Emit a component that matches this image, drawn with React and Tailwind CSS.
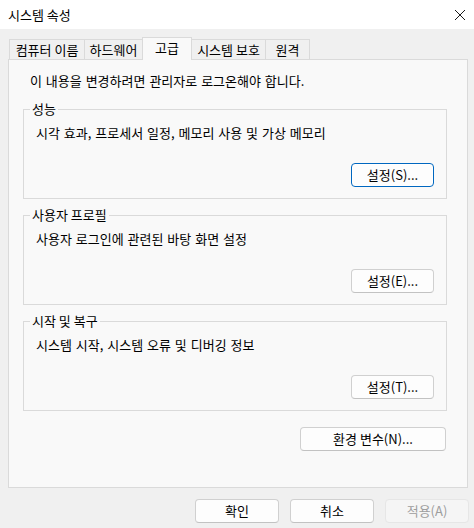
import React from "react";

const font = { fontFamily: '"Noto Sans CJK KR", "Noto Sans", sans-serif' };

function Btn({ children, className = "", primary = false, disabled = false }) {
  return (
    <div
      className={
        "flex items-center justify-center rounded-[4px] border text-[13px] leading-[16px] " +
        (primary
          ? "border-[#0067c0] bg-[#fdfdfd] text-black shadow-[inset_0_0_0_1px_#ffffff] "
          : disabled
          ? "border-[#e6e6e6] bg-[#f5f5f5] text-[#9d9d9d] "
          : "border-[#d0d0d0] border-b-[#c2c2c2] bg-[#fdfdfd] text-black ") +
        className
      }
    >
      {children}
    </div>
  );
}

function Group({ title, desc, btn, primary }) {
  return (
    <fieldset className="ml-[14px] w-[424px] border border-[#dadada] pb-[11px]">
      <legend className="ml-[6px] px-[2px] text-[13px] leading-[16px] text-black">{title}</legend>
      <div className="mt-[8px] pl-[12px] text-[13px] leading-[16px] text-black [word-spacing:1px]">{desc}</div>
      <div className="mt-[22px] flex justify-end pr-[12px]">
        <Btn primary={primary} className="h-[24px] w-[83px]">{btn}</Btn>
      </div>
    </fieldset>
  );
}

const tabs = [
  { label: "컴퓨터 이름", w: "w-[76px]" },
  { label: "하드웨어", w: "w-[59px]" },
  { label: "고급", w: "w-[50px]", active: true },
  { label: "시스템 보호", w: "w-[75px]" },
  { label: "원격", w: "w-[45px]" },
];

export default function App() {
  return (
    <div className="flex h-[528px] w-[474px] flex-col bg-[#f0f0f0] text-black" style={font}>
      <div className="flex h-[29px] items-center justify-between bg-white pl-[8px] pr-[7px]">
        <span className="text-[13px] leading-[16px]">시스템 속성</span>
        <svg width="12" height="12" viewBox="0 0 12 12" className="mr-[1px]">
          <path d="M1 1 L11 11 M11 1 L1 11" stroke="#1a1a1a" strokeWidth="1" fill="none" />
        </svg>
      </div>

      <div className="relative z-10 flex items-end pl-[9px] pt-[8px]">
        {tabs.map((t) =>
          t.active ? (
            <div
              key={t.label}
              className={
                t.w +
                " -ml-px flex h-[23px] items-start justify-center border border-b-0 border-[#dadada] bg-[#f9f9f9] pt-[2px] text-[13px] leading-[16px]"
              }
            >
              {t.label}
            </div>
          ) : (
            <div
              key={t.label}
              className={
                t.w +
                " -ml-px mb-px flex h-[20px] items-center justify-center border border-b-0 border-[#dadada] bg-[#f0f0f0] text-[13px] leading-[16px] first:ml-0"
              }
            >
              {t.label}
            </div>
          )
        )}
      </div>

      <div className="relative -mt-px ml-[8px] h-[429px] w-[460px] border border-[#dadada] bg-[#f9f9f9]">
        <div className="mt-[13px] pl-[21px] text-[13px] leading-[16px] [word-spacing:1px]">
          이 내용을 변경하려면 관리자로 로그온해야 합니다.
        </div>
        <div className="mt-[12px]">
          <Group
            title="성능"
            desc="시각 효과, 프로세서 일정, 메모리 사용 및 가상 메모리"
            btn="설정(S)..."
            primary
          />
        </div>
        <div className="mt-[8px]">
          <Group title="사용자 프로필" desc="사용자 로그인에 관련된 바탕 화면 설정" btn="설정(E)..." />
        </div>
        <div className="mt-[8px]">
          <Group title="시작 및 복구" desc="시스템 시작, 시스템 오류 및 디버깅 정보" btn="설정(T)..." />
        </div>
        <div className="mt-[16px] flex justify-end pr-[21px]">
          <Btn className="h-[24px] w-[146px]">환경 변수(N)...</Btn>
        </div>
      </div>

      <div className="mt-[11px] flex justify-end gap-[11px] pr-[5px]">
        <Btn className="h-[24px] w-[84px]">확인</Btn>
        <Btn className="h-[24px] w-[84px]">취소</Btn>
        <Btn disabled className="h-[24px] w-[84px]">적용(A)</Btn>
      </div>
    </div>
  );
}
